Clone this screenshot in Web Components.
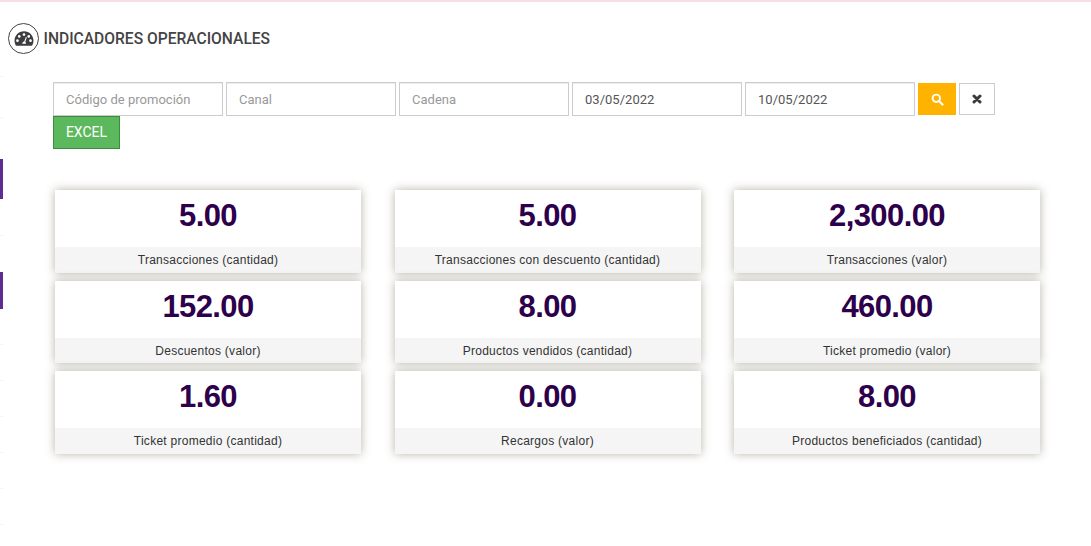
<!DOCTYPE html>
<html lang="es"><head><meta charset="utf-8"><title>Indicadores operacionales</title>
<style>
html,body{margin:0;padding:0;background:#fff;height:546px;overflow:hidden}
body{font-family:Roboto,"Liberation Sans",sans-serif;position:relative}
</style></head><body>
<template id="t-page"><style>
:host{display:block;border-top:2px solid #f5dfe4;height:544px;box-sizing:border-box}
.filters{padding:0 0 0 53px;margin-top:28px}
.cards{margin-top:41px;padding:0 51px 0 55px}
</style>
<op-header></op-header>
<div class="filters"><slot name="filters"></slot></div>
<div class="cards"><slot name="cards"></slot></div>
<slot name="side"></slot></template>

<template id="t-header"><style>
:host{display:flex;align-items:center;height:32px;margin:20px 0 0 8px;gap:5px;color:#444;font:500 15.600px/32px Roboto,sans-serif}
.ic{width:31px;height:31px;box-sizing:border-box;border:1px solid #444;border-radius:50%;display:flex;align-items:center;justify-content:center}
h1{font:inherit;margin:0;padding-top:1px;margin-left:-.5px}
</style><span class="ic"><svg width="20" height="17" viewBox="0 0 19 16"><path fill="#3d3d3f" fill-rule="evenodd" d="M9.5 1C4.5 1 .5 5 .5 10c0 1.800.5 3.500 1.400 5h15.200c.9-1.500 1.400-3.200 1.400-5 0-5-4-9-9-9zM9.500 3a1.300 1.300 0 1 1 0 2.600 1.300 1.300 0 0 1 0-2.600zM5 4.700A1.300 1.300 0 1 1 5 7.300 1.300 1.300 0 0 1 5 4.700zM14 4.700a1.300 1.300 0 1 1 0 2.600 1.300 1.300 0 0 1 0-2.600zM3.300 8.800a1.300 1.300 0 1 1 0 2.600 1.300 1.300 0 0 1 0-2.600zM15.700 8.800a1.300 1.300 0 1 1 0 2.600 1.300 1.300 0 0 1 0-2.600zM11.300 6.500l.9.400-1.500 4.500c.5.400.8 1 .8 1.600H7.800c0-1.100.8-2 1.900-2.100z"/></svg></span><h1><slot></slot></h1></template>

<template id="t-filters"><style>
:host{display:flex;flex-wrap:wrap;width:960px;column-gap:3px;align-items:flex-start}
.b{box-sizing:border-box;height:32px;margin-top:1px;border:0;display:flex;align-items:center;justify-content:center;padding:0}
.s{width:38px;background:#ffb300}
.x{width:36px;background:#fff;border:1px solid #ccc}
.excel{box-sizing:border-box;width:67px;height:33px;margin-top:0;background:#5cb85c;border:1px solid #3d8b3d;color:#fff;font:400 14px/31px Roboto,sans-serif;text-align:center;padding:0}
</style><slot></slot>
<span class="b s"><svg width="13" height="13" viewBox="0 0 13 13"><circle cx="5.300" cy="5.300" r="3.700" fill="none" stroke="#fff" stroke-width="1.900"/><path d="M8.200 8.200l3.300 3.300" stroke="#fff" stroke-width="2.200" stroke-linecap="round"/></svg></span>
<span class="b x"><svg width="10" height="10" viewBox="0 0 10 10"><path d="M2 2l6 6M8 2L2 8" stroke="#3a3a3a" stroke-width="3" stroke-linecap="round"/></svg></span>
<button class="excel">EXCEL</button></template>

<template id="t-field"><style>
:host{display:block;box-sizing:border-box;width:170px;height:34px;border:1px solid #ccc;box-shadow:inset 0 1px 1px rgba(0,0,0,.075);padding:0 12px;font:400 13px/33px Roboto,sans-serif;letter-spacing:.02px;color:#999;white-space:nowrap;background:#fff}
:host([value]){color:#555}
</style><slot></slot></template>

<template id="t-grid"><style>
:host{display:grid;grid-template-columns:repeat(3,306px);column-gap:33.500px;row-gap:8px}
</style><slot></slot></template>

<template id="t-card"><style>
:host{display:flex;flex-direction:column;height:82.500px;background:#fff;box-shadow:0 0 9px rgba(85,75,50,.42)}
.v{flex:1;text-align:center;font:700 31px/52px "Liberation Sans",Arial,sans-serif;letter-spacing:-.6px;color:#2d004b;padding-bottom:5px}
.l{height:25.250px;background:#f5f5f5;text-align:center;font:400 12px/26px "Liberation Sans",Arial,sans-serif;letter-spacing:.26px;color:#333}
</style><div class="v"><slot name="value"></slot></div><div class="l"><slot></slot></div></template>

<template id="t-side"><style>
:host{position:absolute;left:0;width:3px;background:#5f2d92}
:host([tick]){height:1px;width:4px;background:#f6f6f6}
</style></template>

<op-page>
  <op-filters slot="filters">
    <op-field>Código de promoción</op-field>
    <op-field>Canal</op-field>
    <op-field>Cadena</op-field>
    <op-field value>03/05/2022</op-field>
    <op-field value>10/05/2022</op-field>
  </op-filters>
  <op-grid slot="cards">
    <op-card><span slot="value">5.00</span>Transacciones (cantidad)</op-card>
    <op-card><span slot="value">5.00</span>Transacciones con descuento (cantidad)</op-card>
    <op-card><span slot="value">2,300.00</span>Transacciones (valor)</op-card>
    <op-card><span slot="value">152.00</span>Descuentos (valor)</op-card>
    <op-card><span slot="value">8.00</span>Productos vendidos (cantidad)</op-card>
    <op-card><span slot="value">460.00</span>Ticket promedio (valor)</op-card>
    <op-card><span slot="value">1.60</span>Ticket promedio (cantidad)</op-card>
    <op-card><span slot="value">0.00</span>Recargos (valor)</op-card>
    <op-card><span slot="value">8.00</span>Productos beneficiados (cantidad)</op-card>
  </op-grid>
  <op-side slot="side" style="top:159px;height:40px"></op-side>
  <op-side slot="side" style="top:272px;height:37px"></op-side>
  <op-side slot="side" tick style="top:76px"></op-side>
  <op-side slot="side" tick style="top:117px"></op-side>
  <op-side slot="side" tick style="top:235px"></op-side>
  <op-side slot="side" tick style="top:344px"></op-side>
  <op-side slot="side" tick style="top:380px"></op-side>
  <op-side slot="side" tick style="top:416px"></op-side>
  <op-side slot="side" tick style="top:452px"></op-side>
  <op-side slot="side" tick style="top:488px"></op-side>
  <op-side slot="side" tick style="top:524px"></op-side>
</op-page>
<script>
const def=(name,tpl)=>customElements.define(name,class extends HTMLElement{constructor(){super();this.attachShadow({mode:'open'}).appendChild(document.getElementById(tpl).content.cloneNode(true));}});
def('op-header','t-header');def('op-filters','t-filters');def('op-field','t-field');def('op-grid','t-grid');def('op-card','t-card');def('op-side','t-side');
def('op-page','t-page');
document.querySelector('op-page').shadowRoot.querySelector('op-header').textContent='INDICADORES OPERACIONALES';
</script>
</body></html>
